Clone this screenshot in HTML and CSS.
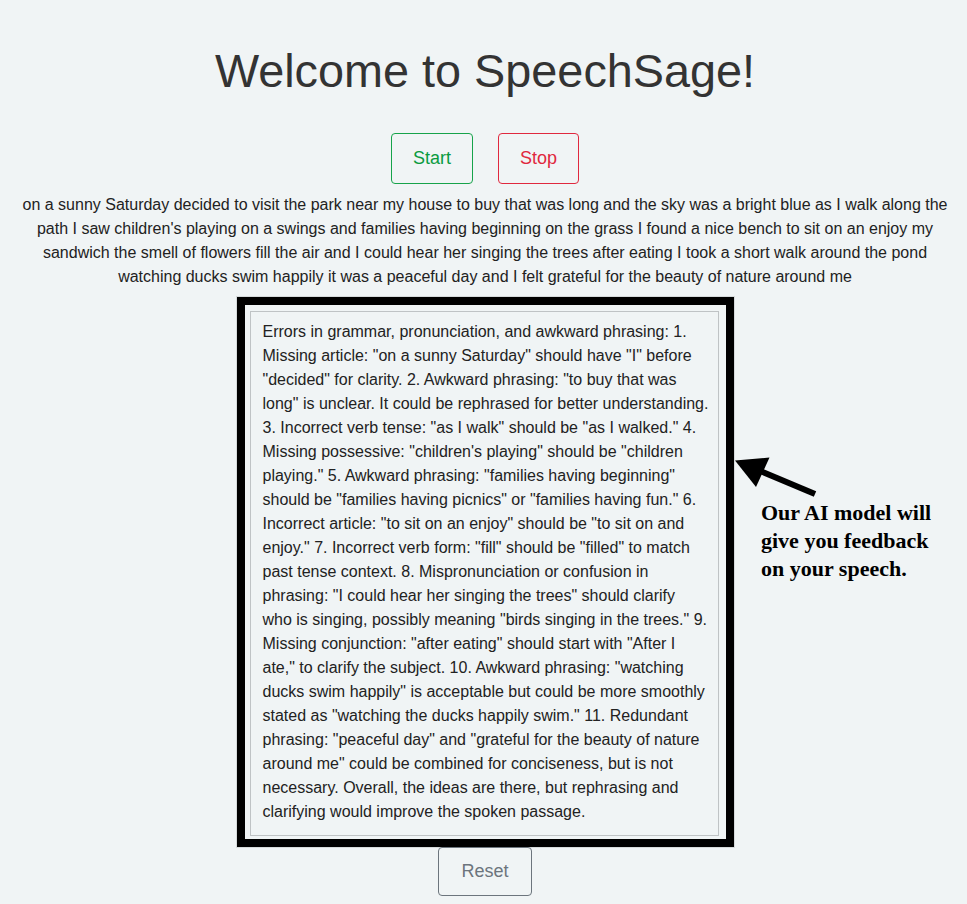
FILE: index.html
```html
<!DOCTYPE html>
<html lang="en">
<head>
<meta charset="utf-8">
<title>SpeechSage</title>
<link rel="stylesheet" href="styles.css">
</head>
<body>
<main class="app">
  <h1 class="title">Welcome to SpeechSage!</h1>
  <div class="controls">
    <button class="btn btn-start">Start</button>
    <button class="btn btn-stop">Stop</button>
  </div>
  <p class="transcript">on a sunny Saturday decided to visit the park near my house to buy that was long and the sky was a bright blue as I walk along the path I saw children's playing on a swings and families having beginning on the grass I found a nice bench to sit on an enjoy my sandwich the smell of flowers fill the air and I could hear her singing the trees after eating I took a short walk around the pond watching ducks swim happily it was a peaceful day and I felt grateful for the beauty of nature around me</p>
  <div class="feedback-frame">
    <div class="feedback">Errors in grammar, pronunciation, and awkward phrasing: 1.<br>Missing article: "on a sunny Saturday" should have "I" before<br>"decided" for clarity. 2. Awkward phrasing: "to buy that was<br>long" is unclear. It could be rephrased for better understanding.<br>3. Incorrect verb tense: "as I walk" should be "as I walked." 4.<br>Missing possessive: "children's playing" should be "children<br>playing." 5. Awkward phrasing: "families having beginning"<br>should be "families having picnics" or "families having fun." 6.<br>Incorrect article: "to sit on an enjoy" should be "to sit on and<br>enjoy." 7. Incorrect verb form: "fill" should be "filled" to match<br>past tense context. 8. Mispronunciation or confusion in<br>phrasing: "I could hear her singing the trees" should clarify<br>who is singing, possibly meaning "birds singing in the trees." 9.<br>Missing conjunction: "after eating" should start with "After I<br>ate," to clarify the subject. 10. Awkward phrasing: "watching<br>ducks swim happily" is acceptable but could be more smoothly<br>stated as "watching the ducks happily swim." 11. Redundant<br>phrasing: "peaceful day" and "grateful for the beauty of nature<br>around me" could be combined for conciseness, but is not<br>necessary. Overall, the ideas are there, but rephrasing and<br>clarifying would improve the spoken passage.</div>
  </div>
  <button class="btn btn-reset">Reset</button>
</main>
<svg class="annot-arrow" viewBox="730 450 90 50" width="90" height="50" aria-hidden="true">
  <polygon points="735,460.5 769.5,457.5 756,487" fill="#000"/>
  <line x1="758" y1="470" x2="815" y2="494" stroke="#000" stroke-width="6"/>
</svg>
<div class="annot-text">Our AI model will<br>give you feedback<br>on your speech.</div>
</body>
</html>
```

FILE: styles.css
```css
html, body {
  margin: 0;
  padding: 0;
  background: #f0f4f5;
}

body {
  font-family: "Liberation Sans", Arial, sans-serif;
  color: #222;
  position: relative;
  min-height: 904px;
}

.app {
  display: flex;
  flex-direction: column;
  align-items: center;
  padding: 44px 8px 0 11px;
}

.title {
  margin: 0;
  font-size: 46.8px;
  line-height: 54px;
  font-weight: normal;
  color: #333;
}

.controls {
  display: flex;
  gap: 25px;
  margin-top: 35px;
}

.btn {
  font-family: "Liberation Sans", Arial, sans-serif;
  font-size: 18px;
  height: 51px;
  padding: 0 21px;
  background: transparent;
  border: 1px solid;
  border-radius: 4px;
  cursor: pointer;
}

.btn-start {
  color: #0a9b3f;
  border-color: #16a34a;
}

.btn-stop {
  color: #e0283e;
  border-color: #e0283e;
}

.btn-reset {
  color: #6c757d;
  border-color: #6c757d;
  height: 49px;
  padding: 0 22px;
}

.transcript {
  margin: 9px 0 0;
  font-size: 16px;
  line-height: 24px;
  text-align: center;
  color: #222;
}

.feedback-frame {
  margin-top: 8px;
  border: 8px solid #000;
  box-shadow: 0 0 0 1px #d6dadb;
  padding: 6px 7px 3px 5px;
}

.feedback {
  width: 454px;
  height: 504px;
  padding: 8px 1px 11px 12px;
  border: 1px solid #bfc3c5;
  font-size: 16px;
  line-height: 24px;
  color: #222;
  white-space: nowrap;
}

.annot-arrow {
  position: absolute;
  left: 730px;
  top: 450px;
}

.annot-text {
  position: absolute;
  left: 761px;
  top: 499px;
  font-family: "Liberation Serif", "Times New Roman", serif;
  font-weight: bold;
  font-size: 22px;
  line-height: 28px;
  color: #000;
}
```
